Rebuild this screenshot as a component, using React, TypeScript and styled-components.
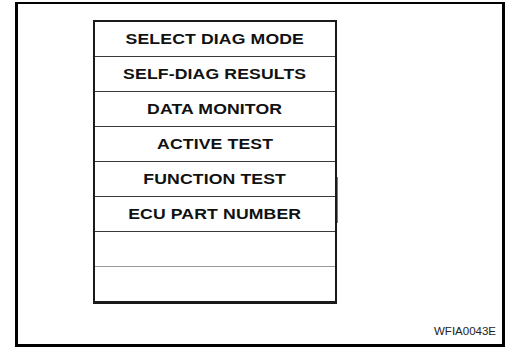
import styled, { createGlobalStyle } from 'styled-components'
import { ReactElement } from 'react'

const Global = createGlobalStyle`
  html, body {
    margin: 0;
    padding: 0;
    background: #fff;
  }
  body {
    font-family: 'Liberation Sans', Arial, sans-serif;
  }
`

const Frame = styled.div`
  box-sizing: border-box;
  margin: 2px 0 0 15px;
  width: 490px;
  height: 345px;
  border: 3px solid #000;
  border-top-width: 2px;
  display: flex;
  flex-direction: column;
  padding: 16px 0 0 75px;
`

const Menu = styled.div`
  position: relative;
  box-sizing: border-box;
  width: 244px;
  border: 2px solid #1a1a1a;
  border-bottom-width: 3px;
  display: flex;
  flex-direction: column;
`

// faint scan artefact on the right edge of the menu
const Smudge = styled.span`
  position: absolute;
  right: -3px;
  top: 155px;
  width: 1px;
  height: 46px;
  background: #777;
`

const Row = styled.div<{ $line: string }>`
  box-sizing: border-box;
  height: 35px;
  border-top: 1px solid ${({ $line }) => $line};
  display: flex;
  align-items: center;
  justify-content: center;
  &:first-child {
    border-top: none;
    height: 34px;
  }
`

// the printed type is a wide grotesque; stretch the glyphs horizontally
const Label = styled.span`
  display: inline-block;
  font-size: 14px;
  font-weight: 700;
  color: #111;
  letter-spacing: 0.1px;
  transform: scaleX(1.26);
`

const Caption = styled.div`
  margin-top: auto;
  align-self: flex-end;
  padding: 0 6px 7px 0;
  font-size: 11.5px;
  color: #222;
`

const items = [
  'SELECT DIAG MODE',
  'SELF-DIAG RESULTS',
  'DATA MONITOR',
  'ACTIVE TEST',
  'FUNCTION TEST',
  'ECU PART NUMBER',
  '',
  '',
]

export default function App(): ReactElement {
  return (
    <>
      <Global />
      <Frame>
        <Menu>
          {items.map((label, i) => (
            <Row key={i} $line={i === 7 ? '#9a9a9a' : '#3a3a3a'}>
              {label && <Label>{label}</Label>}
            </Row>
          ))}
          <Smudge />
        </Menu>
        <Caption>WFIA0043E</Caption>
      </Frame>
    </>
  )
}
